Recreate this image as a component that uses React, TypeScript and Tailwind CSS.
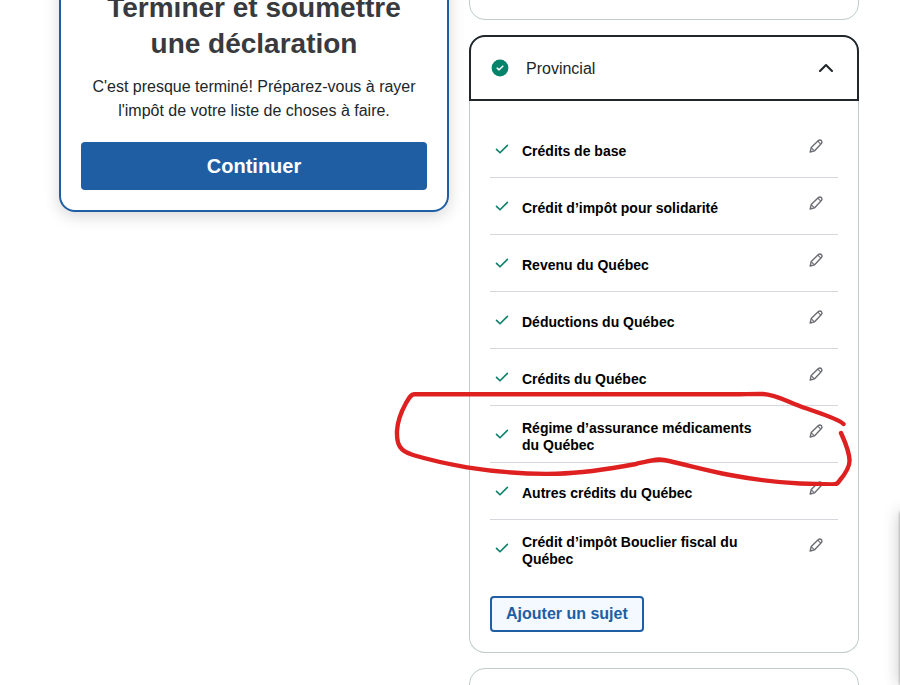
import type { ReactNode } from "react";

type Topic = {
  id: string;
  label: string;
  highlighted?: boolean;
};

const topics: Topic[] = [
  { id: "base", label: "Crédits de base" },
  { id: "solidarite", label: "Crédit d’impôt pour solidarité" },
  { id: "revenu", label: "Revenu du Québec" },
  { id: "deductions", label: "Déductions du Québec" },
  { id: "credits", label: "Crédits du Québec" },
  { id: "ramq", label: "Régime d’assurance médicaments du Québec", highlighted: true },
  { id: "autres", label: "Autres crédits du Québec" },
  { id: "bouclier", label: "Crédit d’impôt Bouclier fiscal du Québec" },
];

function CheckIcon() {
  return (
    <svg className="w-6 shrink-0" viewBox="0 0 24 14" fill="none" aria-hidden="true">
      <path d="M6.5 7.4 L10 10.8 L17.4 3.4" stroke="#0b8068" strokeWidth="1.6" strokeLinecap="round" strokeLinejoin="round" />
    </svg>
  );
}

function DoneBadge() {
  return (
    <svg className="size-[18px] shrink-0" viewBox="0 0 18 18" fill="none" aria-hidden="true">
      <circle cx="9" cy="9" r="8.4" fill="#05836b" />
      <path d="M6.2 9.2 L8.1 10.8 L11.8 7.2" stroke="#fff" strokeWidth="1.6" strokeLinecap="round" strokeLinejoin="round" />
    </svg>
  );
}

function PencilIcon() {
  return (
    <svg className="size-4" viewBox="0 0 16 16" fill="none" stroke="#6b6c72" strokeWidth="1.4" strokeLinejoin="round" aria-hidden="true">
      <path d="M2.2 14 L3.2 9.6 L10.4 2.6 Q11.9 1.3 13.4 2.6 Q14.7 4.100 13.4 5.600 L6.4 12.900 Z" />
      <path d="M9.800 3.200 L12.800 6.200 M3.200 9.600 L6.400 12.900" strokeWidth="1.1" />
    </svg>
  );
}

function ChevronUpIcon() {
  return (
    <svg className="w-6 shrink-0" viewBox="0 0 24 24" fill="none" aria-hidden="true">
      <path d="M7 15 L13 9.1 L19 15" stroke="#21262a" strokeWidth="2.1" strokeLinecap="round" strokeLinejoin="round" />
    </svg>
  );
}

// Freehand red loop drawn around a topic
function HandDrawnLoop() {
  return (
    <svg
      className="pointer-events-none absolute -top-5 -left-[100px] z-10 h-[100px] w-[470px]"
      viewBox="390 386 470 100"
      fill="none"
      stroke="#de2020"
      strokeWidth="4.4"
      strokeLinecap="round"
      strokeLinejoin="round"
      aria-hidden="true"
    >
      <path d="M843.5 424 C837 418 819 413 805 408 C788 402 776 394.5 763 394 C754 393.8 744 394.3 735 394.3 L414 394.3 C411 394.3 409 398 406 403 C401 412 397.5 422 397 431 C396.5 445 400 451 413 455 C428 459.5 448 464 467 467.3 C497 472 527 474.5 557 473.7 C587 473 612 468.5 636 464 C648 461 656 458.5 664 460 C684 464 704 470 730 475 C754 479.5 778 482.5 800 483.5 L832 484.5 C837 484.5 838 483 840 480 C845 474 850 467 849.5 460 C849 450 845 442 841 433" />
    </svg>
  );
}

function TopicRow({ topic, children }: { topic: Topic; children?: ReactNode }) {
  return (
    <li className="relative flex min-h-14 items-center border-b border-[#d4d7dc] last:border-b-0 not-last:min-h-[57px]">
      <CheckIcon />
      <span className="flex-1 pt-[5px] pr-12 pl-2 text-sm leading-[17px] font-bold text-black">{topic.label}</span>
      <button type="button" aria-label={`Modifier ${topic.label}`} className="mr-3.5 mb-1.5 cursor-pointer">
        <PencilIcon />
      </button>
      {children}
    </li>
  );
}

export default function App() {
  return (
    <main className="relative grid h-screen grid-cols-2 items-start gap-5 overflow-hidden bg-white pr-[41px] pl-[59px] font-['Liberation_Sans',Arial,sans-serif] text-[#21262a]">
      <section className="-mt-8 rounded-2xl border-2 border-[#205ea3] p-5 text-center shadow-[0_4px_16px_rgba(0,0,0,0.16)]">
        <h1 className="text-[28px] leading-9 font-bold text-[#393a3d]">Terminer et soumettre une déclaration</h1>
        <p className="mt-[13px] text-base leading-6">
          C'est presque terminé! Préparez-vous à rayer l'impôt de votre liste de choses à faire.
        </p>
        <button type="button" className="mt-[19px] h-12 w-full cursor-pointer rounded-sm bg-[#205ea3] text-xl font-bold text-white">
          Continuer
        </button>
      </section>

      <div className="flex flex-col gap-[15px]">
        <div className="-mt-4 h-9 rounded-b-2xl border border-[#c0cccb]" />

        <section>
          <h2>
            <button
              type="button"
              aria-expanded="true"
              aria-controls="provincial-topics"
              className="flex h-[66px] w-full cursor-pointer items-center rounded-t-2xl border-2 border-[#21262a] px-5 text-left text-base"
            >
              <DoneBadge />
              <span className="flex-1 pt-0.5 pl-[17px]">Provincial</span>
              <ChevronUpIcon />
            </button>
          </h2>
          <div id="provincial-topics" className="rounded-b-2xl border border-t-0 border-[#c0cccb] p-5">
            <ul>
              {topics.map((topic) => (
                <TopicRow key={topic.id} topic={topic}>
                  {topic.highlighted && <HandDrawnLoop />}
                </TopicRow>
              ))}
            </ul>
            <button
              type="button"
              className="mt-5 h-9 cursor-pointer rounded-sm border-2 border-[#205ea3] bg-[#f3f9ff] px-3.5 text-base font-bold text-[#205ea3]"
            >
              Ajouter un sujet
            </button>
          </div>
        </section>

        <div className="h-16 rounded-t-2xl border border-[#c0cccb]" />
      </div>

      {/* edge of the closed help panel */}
      <div className="absolute top-[512px] -right-2 bottom-0 w-2 shadow-[0_0_16px_rgba(0,0,0,0.3),0_0_3px_rgba(0,0,0,0.4)]" />
    </main>
  );
}
